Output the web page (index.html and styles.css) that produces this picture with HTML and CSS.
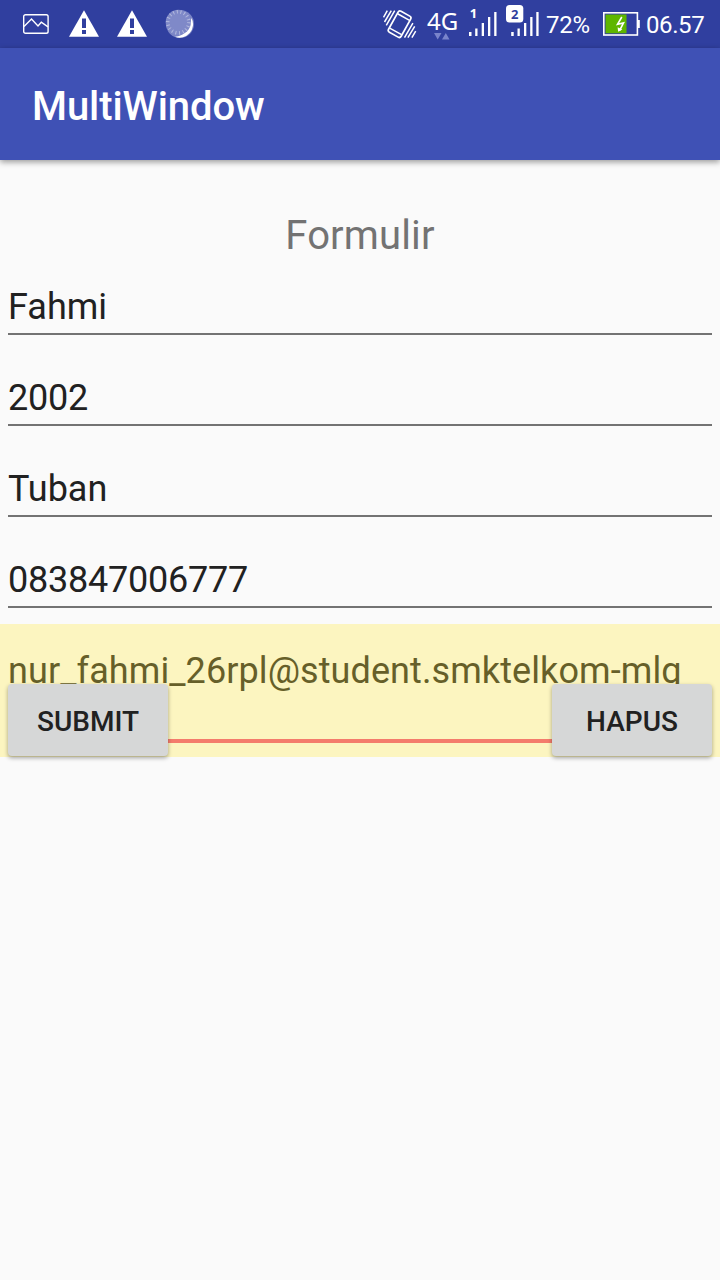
FILE: index.html
```html
<!DOCTYPE html>
<html lang="id">
<head>
<meta charset="utf-8">
<title>MultiWindow</title>
<link rel="stylesheet" href="styles.css">
</head>
<body>
<header class="status-bar">
  <div class="notifications">
    <svg class="icon-picture" width="26" height="20" viewBox="0 0 26 20" fill="none" stroke="#fff" stroke-width="1.4"><rect x=".7" y=".7" width="24.4" height="18.6" rx="1.8"/><path d="M1 12.5 8.5 5l6.5 7 3.3-3.8 6.7 4.6"/></svg>
    <svg class="icon-warning" width="30" height="27" viewBox="0 0 30 27"><path fill="#fff" d="M15 .3 30 26.7H0Z"/><path fill="#303f9f" d="M13 8.5h4v9.5h-4zM13 20h4v4h-4z"/></svg>
    <svg class="icon-warning" width="30" height="27" viewBox="0 0 30 27"><path fill="#fff" d="M15 .3 30 26.7H0Z"/><path fill="#303f9f" d="M13 8.5h4v9.5h-4zM13 20h4v4h-4z"/></svg>
    <svg class="icon-disc" width="30" height="30" viewBox="0 0 30 30"><circle cx="15" cy="15" r="14" fill="#7a84c5"/><path d="M26.5 9A13.4 13.4 0 0 1 10 27.8Q23 27 26.5 9Z" fill="#fff"/><circle cx="13.3" cy="13.3" r="12.6" fill="#7f89c8"/><circle cx="13.3" cy="13.3" r="10.6" fill="none" stroke="#b3b9de" stroke-width="3.6" stroke-dasharray="1 2.7"/></svg>
  </div>
  <div class="system">
    <svg class="icon-vibrate" width="34" height="30" viewBox="0 0 34 30" fill="none" stroke="#fff"><g transform="rotate(29 16.6 15.2)"><rect x="9.4" y="3.2" width="14.4" height="24" rx="2.2" stroke-width="1.7"/><path stroke-width="1.5" d="M9.8 7h13.6M9.8 23.4h13.6"/></g><path stroke-width="1.5" d="M4.3 1.7 .5 8.3M8.3 1.7 1.5 13M11.7 1.7 3.3 16.3M28.9 28.7l3.8-6.6M24.9 28.7l6.8-11.3M21.5 28.7l8.4-14.6"/></svg>
    <div class="network"><span class="network-type">4G</span><svg class="arrows" width="16" height="7" viewBox="0 0 16 7" fill="#7984cb"><path d="M0 0h7.5L3.7 6.5ZM8 6.5h7.5L11.8 0Z"/></svg></div>
    <svg class="signal signal-one" width="29" height="35" viewBox="0 0 29 35"><path fill="#fff" d="M0 28h2.5v4H0zM6.2 24.5h2.3V32H6.2zM12.7 19h2.3v13h-2.3zM19 13h2.3v19H19zM25.2 8h2.3v24h-2.3z"/><text class="sim" x=".7" y="14" fill="#fff">1</text></svg>
    <svg class="signal" width="34" height="35" viewBox="0 0 34 35"><path fill="#fff" d="M5.2 28h2.5v4H5.2zM11.5 24.5h2.3V32h-2.3zM18 19h2.3v13H18zM24.2 13h2.3v19h-2.3zM30.3 8h2.3v24h-2.3z"/><rect y="1" width="17.3" height="17.5" rx="3.5" fill="#fff"/><text class="sim" x="5.1" y="14.5" fill="#303f9f">2</text></svg>
    <span class="percent">72%</span>
    <svg class="battery" width="37" height="24" viewBox="0 0 37 24"><rect x=".8" y=".8" width="33.6" height="22.2" fill="none" stroke="#fff" stroke-width="1.6"/><path fill="#fff" d="M34.5 8h2.3v8h-2.3z"/><path fill="#5eb600" d="M2.5 2.5h21v18.8h-21z"/><path d="m18.8 5-4.3 7.3 6-1.4-3.8 7.5" fill="none" stroke="#fff" stroke-width="1.6"/><path d="m14.6 15.3.6 4.5 4.2-2.4Z" fill="#fff"/></svg>
    <span class="clock">06.57</span>
  </div>
</header>
<div class="app-bar"><h1 class="app-title">MultiWindow</h1></div>
<main class="form">
  <h2 class="form-title">Formulir</h2>
  <div class="field"><div class="value">Fahmi</div></div>
  <div class="field"><div class="value digits">2002</div></div>
  <div class="field"><div class="value">Tuban</div></div>
  <div class="field"><div class="value digits">083847006777</div></div>
  <div class="highlight">
    <div class="email">nur_fahmi_26rpl@student.smktelkom-mlg</div>
    <div class="actions">
      <button class="button">SUBMIT</button>
      <button class="button">HAPUS</button>
    </div>
  </div>
</main>
</body>
</html>
```
FILE: styles.css
```css
* { box-sizing: border-box; }
body {
  margin: 0;
  min-height: 1280px;
  background: #fafafa;
  font-family: Roboto, sans-serif;
  color: #212121;
}
svg { display: block; flex: none; }
.status-bar {
  display: flex;
  justify-content: space-between;
  height: 48px;
  padding: 0 16px 0 23px;
  background: #303f9f;
  color: #fff;
}
.notifications { display: flex; align-items: flex-start; }
.icon-picture { margin: 14px 20px 0 0; }
.icon-warning { margin: 10px 18px 0 0; }
.icon-disc { margin-top: 9px; }
.system { display: flex; align-items: flex-start; }
.icon-vibrate { margin: 9px 10px 0 0; }
.network { width: 32px; margin: 7px 10px 0 0; }
.network-type {
  display: block;
  font: 24px/28px "Noto Sans", sans-serif;
}
.arrows { margin: -2px 0 0 7px; }
.signal { margin-top: 4px; }
.signal-one { margin-right: 8px; }
.sim { font: bold 13px "Noto Sans", sans-serif; }
.percent, .clock { font-size: 24px; line-height: 28px; margin-top: 11px; }
.percent { width: 57px; margin-left: 6px; letter-spacing: -.2px; }
.battery { margin: 12px 6px 0 0; }
.clock { width: 58px; letter-spacing: -.4px; white-space: nowrap; }
.app-bar {
  display: flex;
  align-items: center;
  height: 112px;
  padding: 6px 32px 0;
  background: #3f51b5;
  box-shadow: 0 2px 6px rgba(0, 0, 0, .4);
}
.app-title {
  margin: 0;
  color: #fff;
  font-size: 40px;
  font-weight: 500;
  line-height: 48px;
  letter-spacing: -.08px;
}
.form-title {
  height: 100px;
  margin: 0;
  padding-top: 52px;
  color: #737373;
  font-size: 40px;
  font-weight: 400;
  line-height: 48px;
  letter-spacing: .15px;
  text-align: center;
}
.field { height: 91px; padding: 0 8px; }
.value {
  height: 75px;
  padding-top: 26px;
  border-bottom: 2px solid #737373;
  font-size: 36px;
  line-height: 42px;
}
.digits { letter-spacing: -.23px; }
.highlight { height: 133px; background: #fcf5c0; }
.email {
  height: 119px;
  margin: 0 8px;
  padding-top: 26px;
  border-bottom: 4px solid #f47c6c;
  color: #665f29;
  font-size: 36px;
  line-height: 42px;
  letter-spacing: .09px;
  white-space: nowrap;
}
.actions {
  position: relative;
  display: flex;
  justify-content: space-between;
  margin-top: -59px;
  padding: 0 8px;
}
.button {
  width: 160px;
  height: 72px;
  padding: 3px 0 0;
  border: 0;
  border-radius: 4px;
  background: #d6d7d7;
  box-shadow: 0 2px 4px rgba(0, 0, 0, .35);
  color: #212121;
  font: 500 28px/33px Roboto, sans-serif;
}
```
